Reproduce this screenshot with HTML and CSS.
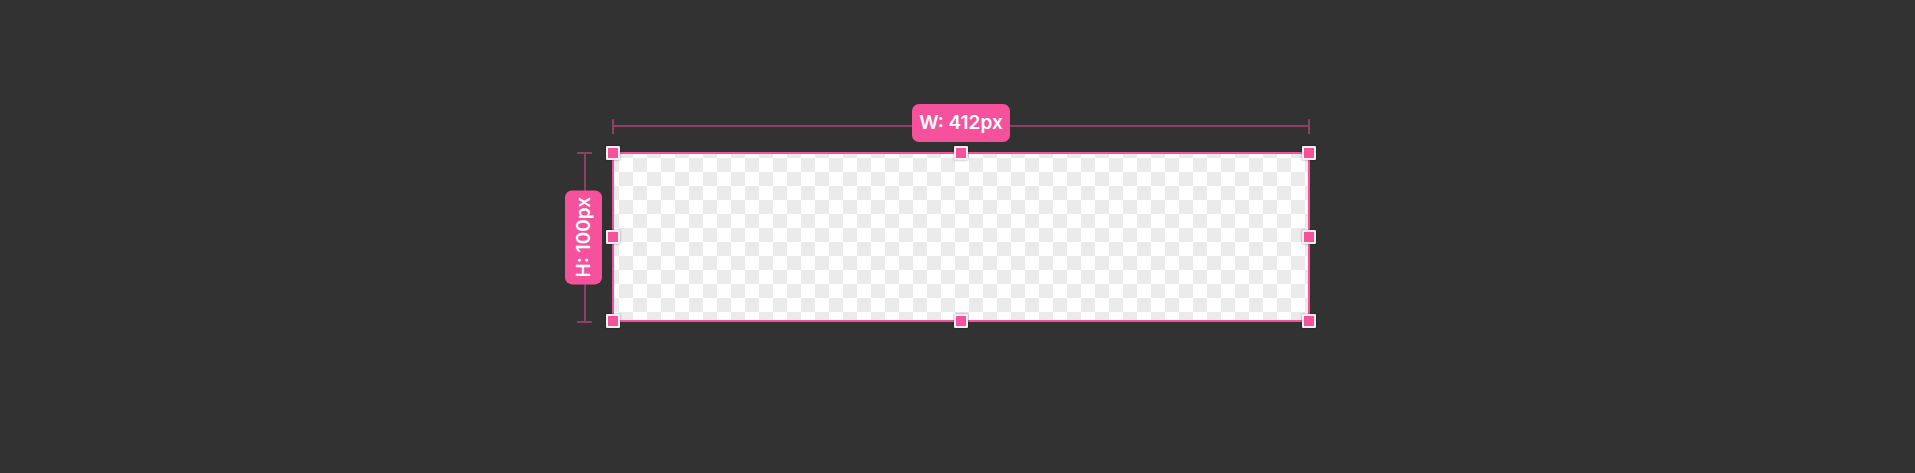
FILE: index.html
```html
<!DOCTYPE html>
<html lang="en">
<head>
    <meta charset="UTF-8">
    <meta name="viewport" content="width=device-width, initial-scale=1.0">
    <title>Selection</title>
    <link rel="stylesheet" href="styles.css">
</head>
<body>

    <!-- Selected layer with its measurement guides -->
    <div class="selection">
        <div class="frame"></div>

        <!-- Width guide above the frame -->
        <div class="guide guide-w">
            <span class="tag">W: 412px</span>
        </div>

        <!-- Height guide left of the frame -->
        <div class="guide guide-h">
            <span class="tag tag-v">H: 100px</span>
        </div>

        <!-- Resize handles -->
        <span class="handle top left"></span>
        <span class="handle top center"></span>
        <span class="handle top right"></span>
        <span class="handle middle left"></span>
        <span class="handle middle right"></span>
        <span class="handle bottom left"></span>
        <span class="handle bottom center"></span>
        <span class="handle bottom right"></span>
    </div>

</body>
</html>
```

FILE: styles.css
```css
body {
    margin: 0;
    height: 473px;
    background-color: #323232;
    display: flex;
    align-items: center;
    justify-content: center;
    font-family: 'Inter', 'Noto Sans', sans-serif;
}

.selection {
    position: relative;
    width: 698px;
    height: 170px;
    margin-left: 7px;
}

.frame {
    box-sizing: border-box;
    width: 100%;
    height: 100%;
    border: 2px solid #f5519d;
    background-color: #fff;
    background-image: conic-gradient(#ebebeb 25%, #fff 0 50%, #ebebeb 0 75%, #fff 0);
    background-size: 28px 28px;
    background-position: 19px 18px;
}

/* measurement guides */
.guide {
    position: absolute;
    display: flex;
    align-items: center;
    justify-content: center;
}

.guide-w {
    left: 0;
    right: 0;
    top: -33px;
    height: 15px;
    border-left: 2px solid #8e4063;
    border-right: 2px solid #8e4063;
    background: linear-gradient(#8e4063, #8e4063) center / 100% 2px no-repeat;
}

.guide-h {
    top: 0;
    bottom: -1px;
    left: -35px;
    width: 15px;
    border-top: 2px solid #8e4063;
    border-bottom: 2px solid #8e4063;
    background: linear-gradient(#8e4063, #8e4063) center / 2px 100% no-repeat;
}

.tag {
    background-color: #f5519d;
    color: #fff;
    font-size: 19px;
    font-weight: 600;
    line-height: 38px;
    padding: 0 7px;
    border-radius: 7px;
    white-space: nowrap;
    transform: translateY(-3px);
}

.tag-v {
    writing-mode: vertical-rl;
    transform: rotate(180deg) translateX(1px);
    padding: 7px 0;
    line-height: 37px;
}

/* resize handles */
.handle {
    position: absolute;
    box-sizing: border-box;
    width: 14px;
    height: 14px;
    background-color: #f5519d;
    border: 2px solid #f0f0f0;
    border-radius: 1px;
    box-shadow: 0 0 2px rgba(0, 0, 0, 0.5);
    margin: -7px 0 0 -7px;
}

.top { top: 1px; }
.middle { top: 50%; }
.bottom { top: calc(100% - 1px); }
.left { left: 1px; }
.center { left: 50%; }
.right { left: calc(100% - 1px); }
```
